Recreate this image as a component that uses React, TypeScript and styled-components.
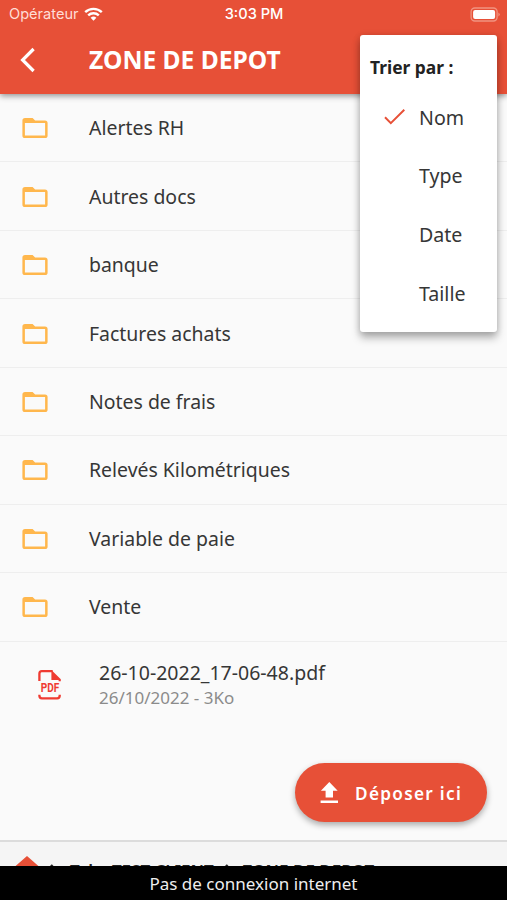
import React from "react";
import styled, { createGlobalStyle } from "styled-components";

const RED = "#e75037";

const GlobalStyle = createGlobalStyle`
  * { box-sizing: border-box; }
  body {
    margin: 0;
    background: #fafafa;
    font-family: "Noto Sans", "Open Sans", sans-serif;
    color: #363636;
    overflow: hidden;
  }
`;

const Screen = styled.div`
  position: relative;
  display: flex;
  flex-direction: column;
  width: 507px;
  height: 900px;
  background: #fafafa;
  overflow: hidden;
`;

const Header = styled.header`
  flex: none;
  height: 94px;
  background: ${RED};
  color: #fff;
  box-shadow: 0 2px 6px rgba(0, 0, 0, 0.42);
  z-index: 1;
`;

const StatusBar = styled.div`
  display: grid;
  grid-template-columns: 1fr auto 1fr;
  align-items: center;
  height: 27px;
  padding: 0 7px 0 9px;
  font: 500 14.6px/27px Inter, sans-serif;
`;

const Clock = styled.span`
  margin: 1px 0 0 -1px;
`;

const Carrier = styled.span`
  display: flex;
  align-items: center;
  gap: 5px;
  font-weight: 400;
  font-size: 14.6px;
  color: #ffddd6;
`;

const BatterySlot = styled.span`
  display: flex;
  justify-content: flex-end;
`;

const TitleBar = styled.div`
  display: flex;
  align-items: center;
  height: 66px;
`;

const BackButton = styled.button`
  display: flex;
  width: 89px;
  padding: 0 0 0 20px;
  border: 0;
  background: none;
`;

const Title = styled.h1`
  margin: 0;
  font-size: 24.6px;
  line-height: 30px;
  font-weight: 700;
`;

const FileList = styled.ul`
  flex: 1;
  margin: 0;
  padding: 0;
  list-style: none;
`;

const FolderRow = styled.li`
  display: flex;
  align-items: center;
  height: 68.45px;
  padding: 1px 0 0 20px;
  border-bottom: 1px solid #eeeeee;
  font-size: 19.45px;
`;

const FolderName = styled.span`
  margin: -1px 0 0 39px;
`;

const FileRow = styled.li`
  display: flex;
  align-items: center;
  height: 87px;
  padding-left: 36px;
`;

const FileText = styled.div`
  margin-left: 35px;
`;

const FileName = styled.div`
  font-size: 19.5px;
  line-height: 26px;
`;

const FileMeta = styled.div`
  font-size: 17px;
  line-height: 24px;
  color: #8b8b8b;
`;

const SortMenu = styled.section`
  position: absolute;
  z-index: 3;
  top: 35px;
  left: 360px;
  width: 137px;
  height: 297px;
  padding-top: 17px;
  border-radius: 3px;
  background: #fff;
  box-shadow: 0 6px 9px rgba(0, 0, 0, 0.28), 0 1px 7px rgba(0, 0, 0, 0.16);
`;

const SortHeading = styled.h2`
  margin: 0 0 6px 10px;
  font-size: 17.4px;
  line-height: 30px;
  font-weight: 700;
  color: #222;
`;

const SortOption = styled.div`
  display: grid;
  grid-template-columns: 35px 1fr;
  align-items: center;
  height: 58.6px;
  padding: 0 0 0 24px;
  font-size: 19.6px;
`;

const CheckSlot = styled.span`
  display: flex;
`;

const UploadButton = styled.button`
  position: absolute;
  right: 20px;
  bottom: 78px;
  display: flex;
  align-items: center;
  width: 192px;
  height: 59px;
  padding: 1px 0 0 25px;
  gap: 16px;
  border: 0;
  border-radius: 30px;
  background: ${RED};
  color: #fff;
  font: 600 17.2px "Noto Sans", sans-serif;
  letter-spacing: 1.3px;
  white-space: nowrap;
  box-shadow: 0 3px 6px rgba(0, 0, 0, 0.32);
`;

const Breadcrumb = styled.nav`
  display: flex;
  flex: none;
  height: 26px;
  padding: 14px 0 0 15px;
  border-top: 2px solid #dcdcdc;
  background: #f5f5f5;
  overflow: hidden;
  color: #222;
  font-size: 17px;
  line-height: 24px;
  font-weight: 600;
  white-space: nowrap;
`;

const Crumb = styled.span<{ $gap: number }>`
  flex: none;
  margin-left: ${(p) => p.$gap}px;
  margin-top: 4px;
`;

const CrumbSeparator = styled.span`
  flex: none;
  margin: 6px 0 0 11px;
`;

const OfflineBanner = styled.footer`
  flex: none;
  height: 34px;
  background: #000;
  color: #eee;
  font-size: 17px;
  line-height: 35px;
  text-align: center;
`;

const WifiIcon = () => (
  <svg width="19" height="14" viewBox="0 0 19 14" fill="none" stroke="#fff" strokeWidth="2.4">
    <path d="M1.2 5.2a12 12 0 0 1 16.6 0" />
    <path d="M4.2 8.3a7.7 7.7 0 0 1 10.6 0" />
    <path d="M9.5 13.7 6.6 10.8a4.2 4.2 0 0 1 5.8 0z" fill="#fff" stroke="none" />
  </svg>
);

const BatteryIcon = () => (
  <svg width="30" height="15" viewBox="0 0 30 15">
    <rect x="1.1" y="1" width="26" height="13" rx="3.7" fill="none" stroke="#f19380" strokeWidth="1.3" />
    <rect x="3.1" y="3" width="22" height="9" rx="2" fill="#fff" />
    <path d="M28.4 5.5q1.4.8 1.4 2t-1.4 2z" fill="#f19380" />
  </svg>
);

const BackIcon = () => (
  <svg width="16" height="26" viewBox="0 0 16 26" fill="none" stroke="#fff" strokeWidth="3.2">
    <path d="M13.6 2 2.6 13l11 11" />
  </svg>
);

const FolderIcon = () => (
  <svg width="30" height="30" viewBox="0 0 30 30" fill="#ffb74d">
    <path
      fillRule="evenodd"
      d="M5 5h7.6l2.5 2.4H25A2.6 2.6 0 0 1 27.6 10v12.4A2.6 2.6 0 0 1 25 25H5a2.6 2.6 0 0 1-2.6-2.6V7.6A2.6 2.6 0 0 1 5 5zM4.9 10v12.5h20.2V10z"
    />
  </svg>
);

const PdfIcon = () => (
  <svg width="28" height="32" viewBox="0 0 28 32" fill="none" stroke="#ef3b32" strokeWidth="2.3">
    <path d="M3.4 12V4.7a2.5 2.5 0 0 1 2.5-2.5h10.8" />
    <path d="M15.4 1.1 24.8 10.3v2h-2.2v-1.3h-7.2z" fill="#ef3b32" stroke="none" />
    <path d="M3.4 25.7v1.1a2.5 2.5 0 0 0 2.5 2.5h15.3a2.5 2.5 0 0 0 2.5-2.5v-1.1" />
    <text
      x="14"
      y="22.8"
      textAnchor="middle"
      textLength="18.5"
      lengthAdjust="spacingAndGlyphs"
      fontFamily="Roboto, sans-serif"
      fontWeight="700"
      fontSize="12.8"
      fill="#ef3b32"
      stroke="none"
    >
      PDF
    </text>
  </svg>
);

const CheckIcon = () => (
  <svg width="22" height="18" viewBox="0 0 22 18" fill="none" stroke={RED} strokeWidth="2">
    <path d="m1 9.3 5.8 5.8L20.3 1.8" />
  </svg>
);

const UploadIcon = () => (
  <svg width="19" height="22" viewBox="0 0 19 22" fill="#fff">
    <path d="M9.3 0 .9 8.8h4.7v6.8H13V8.8h4.7zM.6 18.4H18V21H.6z" />
  </svg>
);

const HomeIcon = () => (
  <svg width="24" height="22" viewBox="0 0 24 22" fill={RED}>
    <path d="M12 0 0 10.5h3.2V22h17.6V10.5H24z" />
  </svg>
);

const CrumbArrow = () => (
  <svg width="9" height="16" viewBox="0 0 9 16" fill="none" stroke="#222" strokeWidth="2.4">
    <path d="m1 1 6.5 7L1 15" />
  </svg>
);

const folders = [
  "Alertes RH",
  "Autres docs",
  "banque",
  "Factures achats",
  "Notes de frais",
  "Relevés Kilométriques",
  "Variable de paie",
  "Vente",
];

const sortOptions = ["Nom", "Type", "Date", "Taille"];

export default function App() {
  return (
    <>
      <GlobalStyle />
      <Screen>
        <Header>
          <StatusBar>
            <Carrier>
              Opérateur <WifiIcon />
            </Carrier>
            <Clock>3:03 PM</Clock>
            <BatterySlot>
              <BatteryIcon />
            </BatterySlot>
          </StatusBar>
          <TitleBar>
            <BackButton aria-label="Retour">
              <BackIcon />
            </BackButton>
            <Title>ZONE DE DEPOT</Title>
          </TitleBar>
        </Header>
        <FileList>
          {folders.map((name) => (
            <FolderRow key={name}>
              <FolderIcon />
              <FolderName>{name}</FolderName>
            </FolderRow>
          ))}
          <FileRow>
            <PdfIcon />
            <FileText>
              <FileName>26-10-2022_17-06-48.pdf</FileName>
              <FileMeta>26/10/2022 - 3Ko</FileMeta>
            </FileText>
          </FileRow>
        </FileList>
        <Breadcrumb>
          <HomeIcon />
          <CrumbSeparator>
            <CrumbArrow />
          </CrumbSeparator>
          <Crumb $gap={11}>Tab</Crumb>
          <Crumb $gap={13}>TEST CLIENT</Crumb>
          <CrumbSeparator>
            <CrumbArrow />
          </CrumbSeparator>
          <Crumb $gap={9}>ZONE DE DEPOT</Crumb>
        </Breadcrumb>
        <OfflineBanner>Pas de connexion internet</OfflineBanner>
        <UploadButton>
          <UploadIcon />
          Déposer ici
        </UploadButton>
        <SortMenu>
          <SortHeading>Trier par :</SortHeading>
          {sortOptions.map((option, i) => (
            <SortOption key={option}>
              <CheckSlot>{i === 0 && <CheckIcon />}</CheckSlot>
              {option}
            </SortOption>
          ))}
        </SortMenu>
      </Screen>
    </>
  );
}
